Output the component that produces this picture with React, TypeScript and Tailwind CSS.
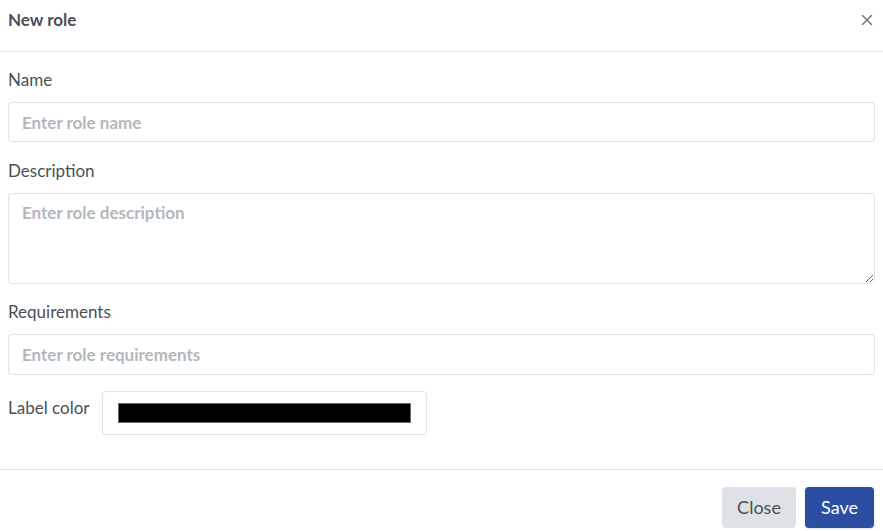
import React from 'react';

const font = { fontFamily: 'Lato, "Noto Sans", sans-serif' };

export default function App() {
  return (
    <div
      className="w-[883px] h-[531px] overflow-hidden bg-white text-[#495057] font-['Lato','Noto_Sans',sans-serif]"
      style={font}
    >
      {/* Header */}
      <div className="h-[52px] flex items-start justify-between pl-2 pr-[10px] pt-[8px] border-b border-[#dee2e6]">
        <h2 className="text-[17px] leading-6 font-bold text-[#495057]">New role</h2>
        <button className="mt-[1px] text-[#777] leading-none">
          <svg width="12" height="12" viewBox="0 0 12 12" className="mt-[5px]">
            <path d="M1.5 1.5 L10.5 10.5 M10.5 1.5 L1.5 10.5" stroke="#7a7a7a" strokeWidth="1.6" strokeLinecap="round" />
          </svg>
        </button>
      </div>

      {/* Body */}
      <div className="px-2 pt-[16px] pb-[34px] flex flex-col border-b border-[#dee2e6]">
        <div className="flex flex-col gap-[10px]">
          <label className="text-[17px] leading-6">Name</label>
          <input
            placeholder="Enter role name"
            className="h-[40px] w-full rounded border border-[#dfe1e6] px-[13px] text-[17px] font-bold placeholder:text-[#b3b8be] outline-none"
          />
        </div>
        <div className="flex flex-col gap-[10px] mt-[17px]">
          <label className="text-[17px] leading-6">Description</label>
          <textarea
            placeholder="Enter role description"
            className="h-[91px] w-full rounded border border-[#dfe1e6] px-[13px] pt-[6px] text-[17px] font-bold placeholder:text-[#b3b8be] outline-none resize-y"
          />
        </div>
        <div className="flex flex-col gap-[10px] mt-[16px]">
          <label className="text-[17px] leading-6">Requirements</label>
          <input
            placeholder="Enter role requirements"
            className="h-[41px] w-full rounded border border-[#dfe1e6] px-[13px] text-[17px] font-bold placeholder:text-[#b3b8be] outline-none"
          />
        </div>
        <div className="flex items-start gap-[13px] mt-[16px]">
          <label className="text-[17px] leading-6 pt-[5px]">Label color</label>
          <div className="w-[325px] h-[44px] rounded border border-[#dfe1e6] flex items-center px-[15px]">
            <div className="h-[20px] w-full bg-black border border-[#6b6b6b]" />
          </div>
        </div>
      </div>

      {/* Footer */}
      <div className="flex justify-end gap-[9px] pr-[9px] pt-[17px]">
        <button className="h-[41px] w-[74px] rounded bg-[#dee2e6] text-[18px] text-[#495057]">Close</button>
        <button className="h-[41px] w-[69px] rounded bg-[#2c4ea2] text-[18px] text-white shadow-sm">Save</button>
      </div>
    </div>
  );
}
